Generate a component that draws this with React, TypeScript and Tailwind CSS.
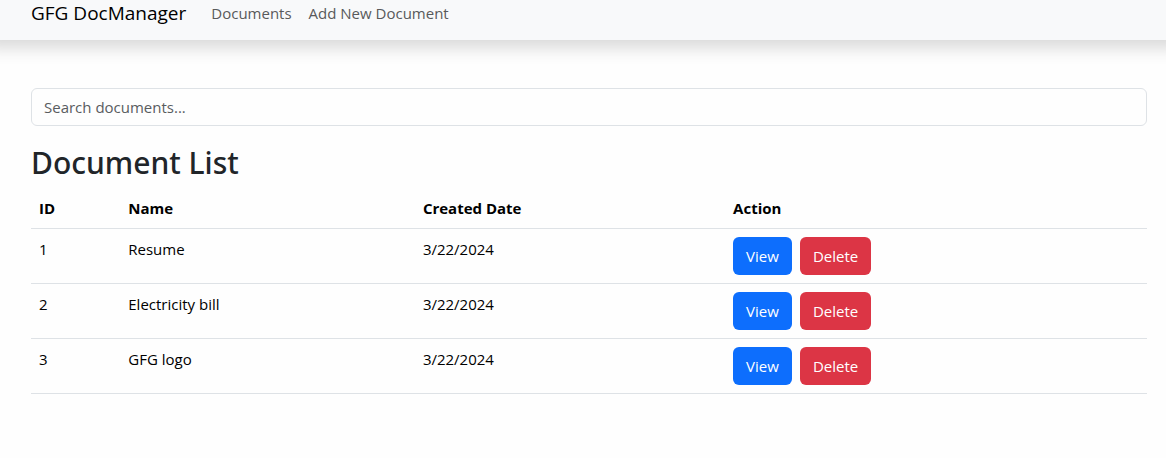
import React, { useState } from "react";

interface DocumentItem {
    id: number;
    name: string;
    createdDate: string;
}

const initialDocuments: DocumentItem[] = [
    { id: 1, name: "Resume", createdDate: "3/22/2024" },
    { id: 2, name: "Electricity bill", createdDate: "3/22/2024" },
    { id: 3, name: "GFG logo", createdDate: "3/22/2024" },
];

const Navbar: React.FC = () => (
    <nav className="flex items-center bg-[#f8f9fa] pr-5 pb-[14px] pl-[31px] shadow-[0_-8px_16px_16px_rgba(0,0,0,0.15)]">
        <a href="#" className="mr-[25px] text-[19px] leading-[26px] text-black">
            GFG DocManager
        </a>
        <ul className="flex gap-[17px] leading-[26px] text-[#595a5b]">
            <li>
                <a href="#documents">Documents</a>
            </li>
            <li>
                <a href="#add">Add New Document</a>
            </li>
        </ul>
    </nav>
);

const App: React.FC = () => {
    const [documents, setDocuments] = useState(initialDocuments);
    const [search, setSearch] = useState("");

    const filtered = documents.filter((doc) =>
        doc.name.toLowerCase().includes(search.toLowerCase())
    );

    const handleDelete = (id: number) => {
        setDocuments(documents.filter((doc) => doc.id !== id));
    };

    return (
        <div className="min-h-screen bg-[#fefefe] font-['Open_Sans',sans-serif] text-[15px] leading-6 text-black">
            <Navbar />
            <main className="pt-12 pr-[19px] pb-16 pl-[31px]">
                <input
                    type="text"
                    aria-label="Search documents"
                    placeholder="Search documents..."
                    value={search}
                    onChange={(e) => setSearch(e.target.value)}
                    className="block h-[38px] w-full rounded-md border border-[#dee2e6] px-3 placeholder:text-[#595c5f]"
                />
                <h2 className="mt-[18px] mb-[6px] font-['Noto_Sans',sans-serif] text-[30px] leading-[38px] font-medium text-[#212529]">
                    Document List
                </h2>
                <table className="w-full table-fixed border-collapse text-left">
                    <thead>
                        <tr className="border-b border-[#dee2e6]">
                            <th className="w-[8%] p-2">ID</th>
                            <th className="w-[26.4%] p-2">Name</th>
                            <th className="w-[27.8%] p-2">Created Date</th>
                            <th className="p-2">Action</th>
                        </tr>
                    </thead>
                    <tbody>
                        {filtered.map((doc) => (
                            <tr key={doc.id} className="border-b border-[#dee2e6] align-top">
                                <td className="p-2">{doc.id}</td>
                                <td className="p-2">{doc.name}</td>
                                <td className="p-2">{doc.createdDate}</td>
                                <td className="p-2">
                                    <div className="flex gap-2">
                                        <button
                                            type="button"
                                            className="h-[38px] rounded-md bg-[#0d6efd] px-[13px] text-white"
                                        >
                                            View
                                        </button>
                                        <button
                                            type="button"
                                            onClick={() => handleDelete(doc.id)}
                                            className="h-[38px] rounded-md bg-[#dc3545] px-[13px] text-white"
                                        >
                                            Delete
                                        </button>
                                    </div>
                                </td>
                            </tr>
                        ))}
                    </tbody>
                </table>
            </main>
        </div>
    );
};

export default App;
